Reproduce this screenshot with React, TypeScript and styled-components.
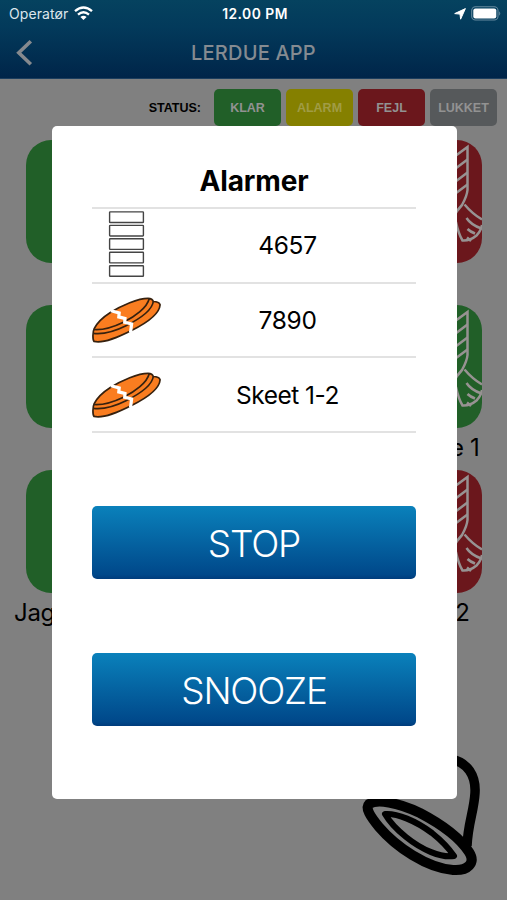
import React from "react";
import styled, { createGlobalStyle } from "styled-components";

const GlobalStyle = createGlobalStyle`
  * { box-sizing: border-box; }
  body { margin: 0; background: #808080; font-family: Inter, "Liberation Sans", sans-serif; }
`;

const Screen = styled.div`
  position: relative;
  width: 507px;
  height: 900px;
  overflow: hidden;
  background: #808080;
  color: #000;
`;

const Header = styled.header`
  height: 79px;
  background: linear-gradient(#05425f, #033a5b 35%, #002549);
  border-bottom: 1px solid #1c3e5e;
`;

const StatusBar = styled.div`
  display: grid;
  grid-template-columns: 1fr auto 1fr;
  align-items: center;
  height: 27px;
  padding: 0 6px 0 9px;
  color: #fff;
  font-size: 13.5px;
`;

const Carrier = styled.div`
  display: flex;
  align-items: center;
  gap: 6px;
  color: #dce6ec;
  font-size: 14px;
  letter-spacing: 0.1px;
`;

const Clock = styled.div`
  font-weight: 600;
  font-size: 13.8px;
  letter-spacing: 0.5px;
`;

const Indicators = styled.div`
  display: flex;
  justify-content: flex-end;
  align-items: center;
  gap: 5px;
`;

const NavBar = styled.div`
  display: grid;
  grid-template-columns: 60px 1fr 60px;
  align-items: center;
  height: 51px;
  padding-left: 15px;
  padding-right: 15px;
`;

const NavTitle = styled.h1`
  margin: 0;
  color: #858b91;
  text-align: center;
  font-size: 20px;
  font-weight: 550;
  letter-spacing: 0.2px;
`;

const Legend = styled.div`
  display: flex;
  justify-content: flex-end;
  align-items: center;
  gap: 5px;
  height: 37px;
  margin-top: 10px;
  padding-right: 10px;
  font-family: "Liberation Sans", sans-serif;
  font-weight: 700;
`;

const LegendTitle = styled.span`
  margin-right: 8px;
  font-size: 12.5px;
`;

const Badge = styled.span<{ $color: string; $text?: string }>`
  display: flex;
  align-items: center;
  justify-content: center;
  width: 67px;
  height: 37px;
  border-radius: 5px;
  background: ${(p) => p.$color};
  color: ${(p) => p.$text ?? "#929292"};
  font-size: 12.5px;
`;

const TileGrid = styled.main`
  display: grid;
  grid-template-columns: 123px 123px;
  justify-content: space-between;
  grid-auto-rows: 165px;
  padding: 14px 25.5px 0 26px;
`;

const TileCell = styled.div`
  display: flex;
  flex-direction: column;
`;

const Tile = styled.div<{ $color: string }>`
  display: flex;
  justify-content: flex-end;
  flex: none;
  height: 123px;
  border-radius: 25px;
  background: ${(p) => p.$color};
  overflow: hidden;
`;

const TileLabel = styled.div<{ $end?: boolean; $shift: number }>`
  margin: 4px ${(p) => (p.$end ? p.$shift : 0)}px 0 ${(p) => (p.$end ? 0 : p.$shift)}px;
  text-align: ${(p) => (p.$end ? "right" : "left")};
  font-size: 24px;
  line-height: 31px;
  letter-spacing: -0.3px;
`;

const Launcher = styled.svg`
  position: absolute;
  left: 350px;
  top: 745px;
`;

const Modal = styled.section`
  position: absolute;
  left: 51.5px;
  top: 126px;
  width: 405px;
  height: 673px;
  padding: 0 40.5px;
  border-radius: 5px;
  background: #fff;
  display: flex;
  flex-direction: column;
`;

const ModalTitle = styled.h2`
  margin: 0;
  padding-top: 36px;
  height: 81px;
  text-align: center;
  font-size: 28px;
  line-height: 38px;
  font-weight: 700;
  letter-spacing: -0.15px;
`;

const AlarmList = styled.ul`
  margin: 0;
  padding: 0;
  list-style: none;
  border-top: 2px solid #e2e2e2;
`;

const AlarmRow = styled.li`
  display: grid;
  grid-template-columns: 69px 1fr;
  align-items: center;
  height: 74.67px;
  border-bottom: 2px solid #e2e2e2;
`;

const AlarmName = styled.span<{ $spacing: number }>`
  text-align: center;
  padding-right: 2px;
  font-size: 24.5px;
  letter-spacing: ${(p) => p.$spacing}px;
`;

const Actions = styled.div`
  display: flex;
  flex-direction: column;
  gap: 74px;
  margin-top: 73px;
`;

const ActionButton = styled.button`
  height: 73px;
  padding: 1px 0 0;
  border: 0;
  border-radius: 5px;
  background: linear-gradient(#0a81bb, #00488a 94%, #003c7c);
  color: #fff;
  font: 350 37px/73px Inter, "Liberation Sans", sans-serif;
  letter-spacing: -1.2px;
`;

const Wifi = () => (
  <svg width="19" height="15" viewBox="0 0 19 15" fill="none" stroke="#fff" strokeWidth="2.4">
    <path d="M1 5.2Q9.5-2 18 5.2" />
    <path d="M4 8.6Q9.5 4 15 8.6" />
    <path d="M9.5 14 6.4 11Q9.5 8.6 12.6 11Z" fill="#fff" stroke="none" />
  </svg>
);

const LocationArrow = () => (
  <svg width="12" height="12" viewBox="0 0 12 12" fill="#fff">
    <path d="M11.4.6 6.6 11.2 6 6.1.7 5.6Z" stroke="#fff" strokeWidth="1" strokeLinejoin="round" />
  </svg>
);

const Battery = () => (
  <svg width="30" height="15" viewBox="0 0 30 15">
    <rect x=".7" y=".8" width="26.3" height="13.2" rx="3.8" fill="none" stroke="#668a9f" strokeWidth="1.1" />
    <rect x="2.3" y="2.4" width="23" height="10" rx="2.2" fill="#fff" />
    <path d="M28.2 5.2q2 2.2 0 4.5Z" fill="#668a9f" />
  </svg>
);

const BackIcon = () => (
  <svg width="20" height="28" viewBox="0 0 20 28" fill="none" stroke="#85898e" strokeWidth="3.6">
    <path d="M15.8 2.3 3.8 13.8 15.8 25.3" />
  </svg>
);

const MachineIcon = () => (
  <svg width="69" height="70" viewBox="0 1.5 69 70" fill="#fff" stroke="#444" strokeWidth="1.4">
    {[0, 1, 2, 3, 4].map((i) => (
      <rect key={i} x="17.6" y={3.4 + i * 13.45} width="33.8" height="10.6" rx=".6" />
    ))}
  </svg>
);

const ClayIcon = () => (
  <svg width="69" height="48" viewBox="0 -.7 69 48" fill="none" stroke="#36210f" strokeWidth="1.7" strokeLinejoin="round">
    <path
      d="M2.2 32C5 26 11 20.5 18 16C30 8.5 46 1.6 56 1.6Q60.5 1.6 61.3 4.8Q67 4.8 68.1 8C67.5 17 54 26.5 40 33.5C27 40 12 47 2 44.7C.6 43 .5 35.5 2.2 32Z"
      fill="#fa7d20"
    />
    <path d="M2 32.8C12 33.6 22 30 32 25.2C43 20 55 11 57.3 1.8" />
    <path d="M1.4 36.6C13 38 24 34 34 29C47 22.5 60 14.5 61.3 4.8" />
    <path d="M19 14 27.2 16.3 26.8 20.2 33 21.7 32.7 25.6 39.6 27.3 38.5 36" stroke="#fff" strokeWidth="3.2" strokeLinejoin="miter" />
  </svg>
);

const FeatherIcon = () => (
  <svg width="42" height="123" viewBox="0 0 42 123" fill="none" stroke="#979292" strokeWidth="2.5">
    <path d="M3 25 27.5 7V50Q27 56 22 65Q17 70 13 78" />
    <path d="M3 38 27.5 19.5M3 51 27.5 32.5M8 59 27.5 44.5M24.5 64.5C30 71 36 76 42 79.5" />
    <path d="M16 82Q18.5 94 22.5 100.5Q30 101 36.5 95.5Q41 91 42 85" />
    <path d="M26.5 78Q31 85 41.5 88.5M27.5 89Q30 91.5 35 93.5M27 97.5 31 101" />
  </svg>
);

const green = "#215f28";
const red = "#6b171c";

const tiles = [
  { left: green, right: red, leftText: "", rightText: "", shift: 0 },
  { left: green, right: green, leftText: "", rightText: "e 1", shift: 2 },
  { left: green, right: red, leftText: "Jag", rightText: "2", shift: 12 },
];

const alarms = [
  { name: "4657", icon: <MachineIcon />, spacing: -0.3 },
  { name: "7890", icon: <ClayIcon />, spacing: -0.3 },
  { name: "Skeet 1-2", icon: <ClayIcon />, spacing: -0.5 },
];

export default function App() {
  return (
    <Screen>
      <GlobalStyle />
      <Header>
        <StatusBar>
          <Carrier>Operatør <Wifi /></Carrier>
          <Clock>12.00 PM</Clock>
          <Indicators><LocationArrow /><Battery /></Indicators>
        </StatusBar>
        <NavBar>
          <BackIcon />
          <NavTitle>LERDUE APP</NavTitle>
        </NavBar>
      </Header>
      <Legend>
        <LegendTitle>STATUS:</LegendTitle>
        <Badge $color={green}>KLAR</Badge>
        <Badge $color="#858000" $text="#a09c45">ALARM</Badge>
        <Badge $color={red}>FEJL</Badge>
        <Badge $color="#56595b">LUKKET</Badge>
      </Legend>
      <TileGrid>
        {tiles.map((t, i) => (
          <React.Fragment key={i}>
            <TileCell>
              <Tile $color={t.left} />
              <TileLabel $shift={-12}>{t.leftText}</TileLabel>
            </TileCell>
            <TileCell>
              <Tile $color={t.right}><FeatherIcon /></Tile>
              <TileLabel $end $shift={t.shift}>{t.rightText}</TileLabel>
            </TileCell>
          </React.Fragment>
        ))}
      </TileGrid>
      <Launcher width="140" height="140" viewBox="0 0 140 140" fill="none" stroke="#000" strokeLinejoin="round">
        <path d="M100 14C118 17 126 31 125 48C124 66 118 78 117 101" strokeWidth="9.5" />
        <path d="M19 59C27 54 47 57 70 68C91 79 110 93 119 107C126 118 118 126 103 125C77 123 46 102 29 82C20 71 15 63 19 59Z" strokeWidth="10" />
        <path d="M35 69C47 68 66 76 82 88C92 96 100 105 104 111C91 113 72 105 56 92C46 84 39 76 35 69Z" strokeWidth="6" />
      </Launcher>
      <Modal>
        <ModalTitle>Alarmer</ModalTitle>
        <AlarmList>
          {alarms.map((a) => (
            <AlarmRow key={a.name}>
              {a.icon}
              <AlarmName $spacing={a.spacing}>{a.name}</AlarmName>
            </AlarmRow>
          ))}
        </AlarmList>
        <Actions>
          <ActionButton>STOP</ActionButton>
          <ActionButton>SNOOZE</ActionButton>
        </Actions>
      </Modal>
    </Screen>
  );
}
